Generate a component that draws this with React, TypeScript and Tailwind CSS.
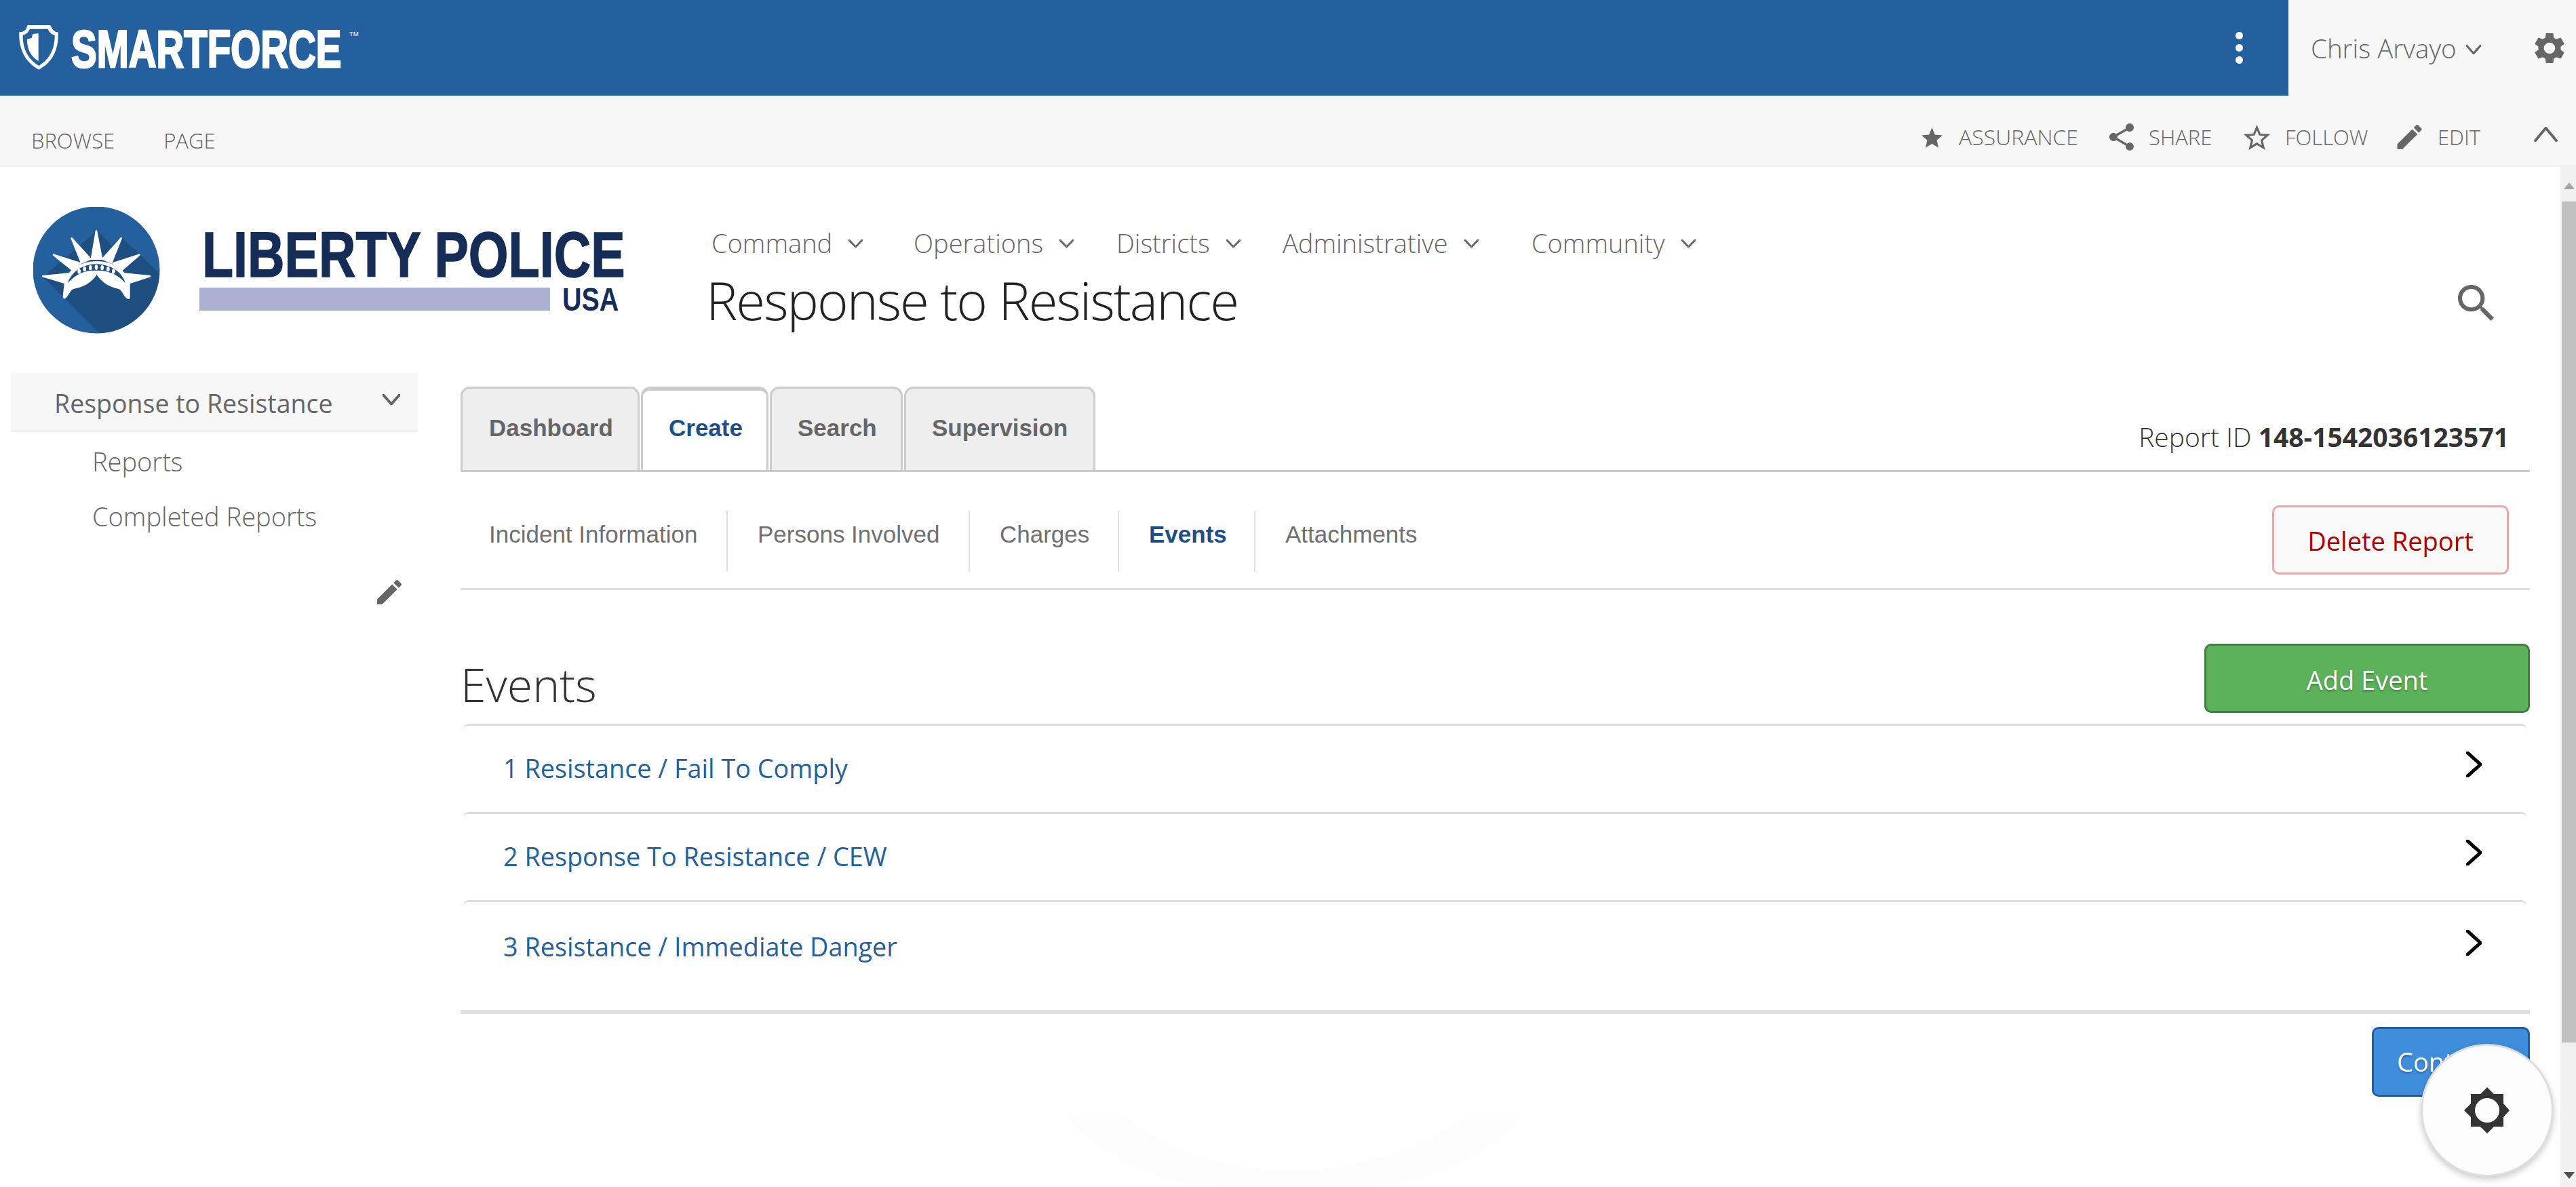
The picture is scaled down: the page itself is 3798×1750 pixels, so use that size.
import React from "react";

const P = {
  star: "M12 17.27L18.18 21l-1.64-7.03L22 9.24l-7.19-.61L12 2 9.19 8.63 2 9.24l5.46 4.73L5.82 21z",
  starO: "M22 9.24l-7.19-.62L12 2 9.19 8.63 2 9.24l5.46 4.73L5.82 21 12 17.27 18.18 21l-1.63-7.03L22 9.24zM12 15.4l-3.76 2.27 1-4.28-3.32-2.88 4.38-.38L12 6.1l1.71 4.04 4.38.38-3.32 2.88 1 4.28L12 15.4z",
  share: "M18 16.08c-.76 0-1.44.3-1.96.77L8.91 12.7c.05-.23.09-.46.09-.7s-.04-.47-.09-.7l7.05-4.11c.54.5 1.25.81 2.04.81 1.66 0 3-1.34 3-3s-1.34-3-3-3-3 1.34-3 3c0 .24.04.47.09.7L8.04 9.81C7.5 9.31 6.79 9 6 9c-1.66 0-3 1.34-3 3s1.34 3 3 3c.79 0 1.5-.31 2.04-.81l7.12 4.16c-.05.21-.08.43-.08.65 0 1.61 1.31 2.92 2.92 2.92 1.61 0 2.92-1.31 2.92-2.92s-1.31-2.92-2.92-2.92z",
  pencil: "M3 17.25V21h3.75L17.81 9.94l-3.75-3.75L3 17.25zM20.71 7.04c.39-.39.39-1.02 0-1.41l-2.34-2.34c-.39-.39-1.02-.39-1.41 0l-1.83 1.83 3.75 3.75 1.83-1.83z",
  gear: "M19.14 12.94c.04-.3.06-.61.06-.94 0-.32-.02-.64-.07-.94l2.03-1.58c.18-.14.23-.41.12-.61l-1.92-3.32c-.12-.22-.37-.29-.59-.22l-2.39.96c-.5-.38-1.03-.7-1.62-.94l-.36-2.54c-.04-.24-.24-.41-.48-.41h-3.84c-.24 0-.43.17-.47.41l-.36 2.54c-.59.24-1.13.57-1.62.94l-2.39-.96c-.22-.08-.47 0-.59.22L2.74 8.87c-.12.21-.08.47.12.61l2.03 1.58c-.05.3-.09.63-.09.94s.02.64.07.94l-2.03 1.58c-.18.14-.23.41-.12.61l1.92 3.32c.12.22.37.29.59.22l2.39-.96c.5.38 1.03.7 1.62.94l.36 2.54c.05.24.24.41.48.41h3.84c.24 0 .44-.17.47-.41l.36-2.54c.59-.24 1.13-.56 1.62-.94l2.39.96c.22.08.47 0 .59-.22l1.92-3.32c.12-.22.07-.47-.12-.61l-2.01-1.58zM12 15.6c-1.98 0-3.6-1.62-3.6-3.6s1.62-3.6 3.6-3.6 3.6 1.62 3.6 3.6-1.62 3.6-3.6 3.6z",
  search: "M15.5 14h-.79l-.28-.27C15.41 12.59 16 11.11 16 9.5 16 5.91 13.09 3 9.5 3S3 5.91 3 9.5 5.91 16 9.5 16c1.61 0 3.09-.59 4.23-1.57l.27.28v.79l5 4.99L20.49 19l-4.99-5zm-6 0C7.01 14 5 11.99 5 9.5S7.01 5 9.5 5 14 7.01 14 9.5 11.99 14 9.5 14z",
};

function Ico({ d, vb, className }: { d: string; vb: string; className: string }) {
  return (
    <svg viewBox={vb} className={className} fill="currentColor">
      <path d={d} />
    </svg>
  );
}

function Chev({ className, points, sw = 3 }: { className: string; points: string; sw?: number }) {
  return (
    <svg viewBox="0 0 24 24" preserveAspectRatio="none" className={className} fill="none" stroke="currentColor" strokeWidth={sw} strokeLinecap="round" strokeLinejoin="miter">
      <polyline vectorEffect="non-scaling-stroke" points={points} />
    </svg>
  );
}

function Shield() {
  return (
    <svg viewBox="0 0 300 270" className="w-[100px] h-[90px] shrink-0">
      <path fill="#fff" d="M62 33H162L172 50C178 60 188 65 197 64C200 130 180 195 112 230C45 195 22 130 25 64C35 65 50 60 56 48Z" />
      <path fill="#25609e" d="M72 50H152C158 65 170 75 182 78C183 130 165 180 112 213C58 180 40 130 41 78C53 75 66 65 72 50Z" />
      <path fill="#fff" d="M110 70V192C80 175 58 140 60 95L80 90L85 72Z" />
    </svg>
  );
}

const LOGO = "'Liberation Sans',sans-serif";

function SiteLogo() {
  return (
    <svg viewBox="49 305 880 187" className="w-[880px] h-[187px] shrink-0 ml-[49px] mt-[59px]">
      <defs>
        <clipPath id="lc">
          <circle cx="142" cy="398" r="93.5" />
        </clipPath>
      </defs>
      <circle cx="142" cy="398" r="93.5" fill="#25609e" />
      <g clipPath="url(#lc)">
        <polygon transform="translate(40 300) scale(0.33333)" fill="#1f4f80" points="70,325 310,120 375,185 418,150 500,225 640,365 640,640 385,640" />
      </g>
      <g transform="translate(40 300) scale(0.33333)">
        <g fill="#fff" stroke="#fff" strokeWidth="8" strokeLinejoin="round">
          <polygon points="306,122 285,245 330,245" />
          <polygon points="197,154 240,262 280,245" />
          <polygon points="416,154 334,245 373,262" />
          <polygon points="117,227 197,292 235,265" />
          <polygon points="496,227 380,265 418,295" />
          <polygon points="70,322 165,350 192,310" />
          <polygon points="543,322 455,350 423,310" />
        </g>
        <path fill="#fff" d="M165 345C175 300 230 255 308 255C385 255 440 300 455 345L455 415C455 425 445 425 438 418C425 405 420 385 405 378C365 370 330 350 308 315C285 350 250 370 205 378C190 385 185 405 172 418C165 425 158 420 158 410Z" />
        <path fill="#1f4f80" d="M180 352C200 295 250 270 305 268C365 270 415 295 435 352C400 312 360 296 305 296C250 296 215 312 180 352Z" />
        <g fill="#fff">
          <ellipse cx="230" cy="300" rx="7" ry="11" />
          <ellipse cx="254" cy="290" rx="7" ry="11" />
          <ellipse cx="280" cy="284" rx="7" ry="11" />
          <ellipse cx="306" cy="282" rx="7" ry="11" />
          <ellipse cx="332" cy="284" rx="7" ry="11" />
          <ellipse cx="358" cy="290" rx="7" ry="11" />
          <ellipse cx="382" cy="300" rx="7" ry="11" />
        </g>
      </g>
      <text transform="translate(298 408) scale(1 1.26)" fill="#152c57" fontFamily={LOGO} fontWeight="700" fontSize="75.5" stroke="#152c57" strokeWidth="1.2">LIBERTY POLICE</text>
      <rect x="294" y="424" width="517" height="34" fill="#acb1d3" />
      <text transform="translate(829 458) scale(1 1.23)" fill="#152c57" fontFamily={LOGO} fontWeight="700" fontSize="39.5">USA</text>
    </svg>
  );
}

const nav = [
  ["Command", "w-[298px]"],
  ["Operations", "w-[299px]"],
  ["Districts", "w-[245px]"],
  ["Administrative", "w-[367px]"],
  ["Community", "w-[280px]"],
];

const ribbon = [
  { t: "ASSURANCE", w: "w-[277px]", g: "gap-[24px]", s: "text-[32px]", icon: <Ico d={P.star} vb="2 2 20 19" className="w-[31px] h-[30px] mt-[1px]" /> },
  { t: "SHARE", w: "w-[198px]", g: "gap-[22px]", s: "text-[31px]", icon: <Ico d={P.share} vb="3 2 18 20" className="w-[36px] h-[40px]" /> },
  { t: "FOLLOW", w: "w-[226px]", g: "gap-[22px]", s: "text-[31px]", icon: <Ico d={P.starO} vb="2 2 20 19" className="w-[39px] h-[37px]" /> },
  { t: "EDIT", w: "w-[201px]", g: "gap-[23px]", s: "text-[31px]", icon: <Ico d={P.pencil} vb="3 3 18 18" className="w-[37px] h-[36px]" /> },
];

const sub = [
  ["Incident Information", "w-[394px] pl-[42px]", false],
  ["Persons Involved", "w-[357px] pl-[44px]", false],
  ["Charges", "w-[220px] pl-[44px]", false],
  ["Events", "w-[201px] pl-[44px]", true],
] as const;

const tabs = [
  ["Dashboard", "w-[264px] pl-[39px] pt-[38px] border-t-[3px] bg-[#eeeeee]", false],
  ["Create", "w-[188px] pl-[38px] pt-[35px] border-t-[6px] bg-white text-[#1a4f8a]", true],
  ["Search", "w-[196px] pl-[38px] pt-[38px] border-t-[3px] bg-[#eeeeee]", false],
  ["Supervision", "w-[282px] pl-[38px] pt-[38px] border-t-[3px] bg-[#eeeeee]", false],
] as const;

const rows = [
  ["1 Resistance / Fail To Comply", "h-[130px] pt-[38px]"],
  ["2 Response To Resistance / CEW", "h-[130px] pt-[38px]"],
  ["3 Resistance / Immediate Danger", "h-[162px] pt-[41px]"],
];

export default function App() {
  return (
    <div className="relative w-[3798px] h-[1750px] overflow-hidden bg-white flex flex-col font-['Open_Sans',sans-serif] text-[#666]">
      <header className="flex h-[141px] shrink-0">
        <div className="flex-1 bg-[#25609e] flex items-center pl-[20px] pr-[67px]">
          <Shield />
          <svg viewBox="105 20 430 101" className="w-[430px] h-[101px] shrink-0 -ml-[15px]">
            <text transform="translate(105 99) scale(1 1.37)" fill="#fff" stroke="#fff" strokeWidth="2" fontFamily={LOGO} fontWeight="700" fontSize="56.5">SMARTFORCE</text>
            <text x="515" y="53" fill="#fff" fontFamily={LOGO} fontSize="9.5">TM</text>
          </svg>
          <div className="ml-auto flex flex-col gap-[7px]">
            <span className="block w-[11px] h-[11px] rounded-full bg-white" />
            <span className="block w-[11px] h-[11px] rounded-full bg-white" />
            <span className="block w-[11px] h-[11px] rounded-full bg-white" />
          </div>
        </div>
        <div className="w-[424px] bg-[#f7f7f7] flex items-center pl-[33px]">
          <span className="text-[38.5px] font-light leading-[50px] w-[229px] whitespace-nowrap">Chris Arvayo</span>
          <Chev className="w-[22px] h-[14px] mt-[4px]" points="1,2 12,22 23,2" />
          <Ico d={P.gear} vb="2.5 2 19 20" className="w-[46px] h-[46px] ml-[78px]" />
        </div>
      </header>

      <div className="h-[105px] shrink-0 bg-[#f7f7f7] border-b-[3px] border-[#f0f0f0] flex items-start">
        <span className="ml-[46px] mt-[46px] text-[31px] leading-[40px] font-light whitespace-nowrap">BROWSE</span>
        <span className="ml-[72px] mt-[46px] text-[31px] leading-[40px] font-light whitespace-nowrap">PAGE</span>
        <div className="ml-auto w-[965px] flex items-start pt-[41px]">
          {ribbon.map((r) => (
            <div key={r.t} className={`${r.w} ${r.g} flex items-center h-[40px]`}>
              {r.icon}
              <span className={`${r.s} leading-[40px] font-light whitespace-nowrap`}>{r.t}</span>
            </div>
          ))}
          <Chev className="w-[37px] h-[22px] mt-[5px]" points="2,22 12,2 22,22" sw={4} />
        </div>
      </div>

      <div className="flex-1 flex min-h-0">
        <div className="flex-1 min-w-0 flex flex-col">
          <div className="h-[303px] shrink-0 flex">
            <SiteLogo />
            <div className="ml-[112px] pt-[87px]">
              <nav className="flex ml-[8px]">
                {nav.map(([t, w]) => (
                  <div key={t} className={`${w} flex items-center`}>
                    <span className="text-[38px] font-light leading-[50px] whitespace-nowrap">{t}</span>
                    <Chev className="w-[21px] h-[12px] ml-[24px] mt-[2px]" points="1,2 12,22 23,2" />
                  </div>
                ))}
              </nav>
              <h1 className="text-[78px] font-light tracking-[-2px] leading-[90px] mt-[14px] text-[#222] whitespace-nowrap">Response to Resistance</h1>
            </div>
            <Ico d={P.search} vb="3 3 17.5 17.5" className="w-[53px] h-[53px] ml-auto mr-[98px] mt-[174px]" />
          </div>

          <div className="flex flex-1 min-h-0">
            <aside className="w-[600px] ml-[16px] shrink-0">
              <div className="h-[88px] bg-[#f7f7f7] border-b-[3px] border-[#eeeeee] flex items-start pl-[64px] pt-[21px]">
                <span className="text-[37.5px] leading-[50px] font-normal whitespace-nowrap">Response to Resistance</span>
                <Chev className="w-[26px] h-[16px] ml-auto mr-[26px] mt-[11px]" points="1,2 12,22 23,2" sw={4} />
              </div>
              <div className="pl-[120px] pt-[3px]">
                <div className="h-[81px] flex items-center text-[38px] font-light whitespace-nowrap">Reports</div>
                <div className="h-[81px] flex items-center text-[38px] font-light whitespace-nowrap">Completed Reports</div>
              </div>
              <div className="flex justify-end pr-[24px] mt-[53px]">
                <Ico d={P.pencil} vb="3 3 18 18" className="w-[36px] h-[36px]" />
              </div>
            </aside>

            <main className="w-[3051px] ml-[63px] shrink-0 flex flex-col">
              <div className="pt-[21px] flex justify-between border-b-[3px] border-[#cccccc] h-[147px]">
                <div className="flex gap-[2px] font-['Liberation_Sans',sans-serif] font-bold text-[35px]">
                  {tabs.map(([t, c]) => (
                    <div key={t} className={`${c} h-[123px] rounded-t-[14px] border-x-[3px] border-[#cccccc] leading-[40px]`}>
                      {t}
                    </div>
                  ))}
                </div>
                <div className="pr-[31px] pt-[51px] text-[39px] leading-[46px] text-[#333] font-light whitespace-nowrap">
                  Report ID <b className="font-bold">148-1542036123571</b>
                </div>
              </div>

              <div className="h-[174px] shrink-0 border-b-[3px] border-[#dee2e6] flex justify-between items-start font-['Liberation_Sans',sans-serif] text-[35px] text-[#707070]">
                <div className="flex mt-[57px]">
                  {sub.map(([t, c, on]) => (
                    <div key={t} className={`${c} h-[90px] border-r-[2px] border-[#dee2e6] pt-[15px] leading-[40px] whitespace-nowrap ${on ? "font-bold text-[#1a4f8a]" : ""}`}>
                      {t}
                    </div>
                  ))}
                  <div className="pl-[44px] pt-[15px] leading-[40px]">Attachments</div>
                </div>
                <button className="mt-[49px] mr-[31px] w-[349px] h-[102px] pt-[2px] rounded-[10px] border-[3px] border-[#e6a8aa] bg-[#f9f9f9] text-[#b00000] font-['Open_Sans',sans-serif] text-[38px] font-normal">
                  Delete Report
                </button>
              </div>

              <div className="flex justify-between items-start h-[197px] pt-[79px] shrink-0">
                <h2 className="text-[68px] leading-[80px] mt-[20px] text-[#333] font-light">Events</h2>
                <button className="w-[480px] h-[102px] pt-[4px] rounded-[10px] border-[3px] border-[#3f7f43] bg-[#5cb25a] text-white text-[38px] [text-shadow:0_2px_3px_rgba(0,0,0,0.3)]">
                  Add Event
                </button>
              </div>

              <div className="ml-[4px] mr-[5px]">
                {rows.map(([t, c]) => (
                  <div key={t} className={`${c} border-t-[3px] border-[#dddddd] rounded-t-[8px] flex justify-between items-start pl-[59px] pr-[66px] text-[#25609e]`}>
                    <span className="text-[37.8px] leading-[50px] whitespace-nowrap">{t}</span>
                    <Chev className="w-[23px] h-[38px] text-black" points="2,1 22,12 2,23" sw={5} />
                  </div>
                ))}
              </div>
              <div className="h-[6px] bg-[#e0e0e0] shrink-0" />
              <div className="flex justify-end mt-[19px]">
                <button className="w-[233px] h-[103px] rounded-[10px] border-[3px] border-[#225d9f] bg-[#3f8edc] text-white text-[38px] text-left pl-[34px] whitespace-nowrap [text-shadow:0_2px_3px_rgba(0,0,0,0.3)]">
                  Continue
                </button>
              </div>
            </main>
          </div>
        </div>

        <div className="w-[23px] shrink-0 bg-[#f1f1f1] flex flex-col items-center">
          <svg viewBox="0 0 16 10" className="w-[16px] h-[10px] mt-[23px] ml-[2px]" fill="#a3a3a3"><polygon points="8,0 16,10 0,10" /></svg>
          <div className="w-[21px] ml-[2px] h-[1240px] mt-[18px] bg-[#c1c1c1]" />
          <svg viewBox="0 0 16 10" className="w-[16px] h-[10px] mt-[191px] ml-[2px]" fill="#505050"><polygon points="0,0 16,0 8,10" /></svg>
        </div>
      </div>

      <svg viewBox="0 0 670 103" className="absolute left-[1572px] top-[1647px] w-[670px] h-[103px]" fill="#fdfdfd">
        <path d="M0 0H89C150 50 240 78 328 78C420 78 520 50 587 0H670C620 60 520 103 430 103H240C140 103 50 60 0 0Z" />
      </svg>

      <div className="absolute left-[3569px] top-[1539px] w-[196px] h-[196px] rounded-full bg-[#fcfcfc] border-[3px] border-[#dddddd] shadow-[0_4px_10px_rgba(0,0,0,0.2)] flex items-center justify-center">
        <svg viewBox="0 0 68 68" className="w-[68px] h-[68px]" fill="#333">
          <path fillRule="evenodd" d="M34 0L44 10H58V24L67 34L58 44V58H44L34 68L24 58H10V44L0 34L10 24V10H24ZM34 16A18 18 0 1 0 34 52A18 18 0 1 0 34 16Z" />
        </svg>
      </div>
    </div>
  );
}
